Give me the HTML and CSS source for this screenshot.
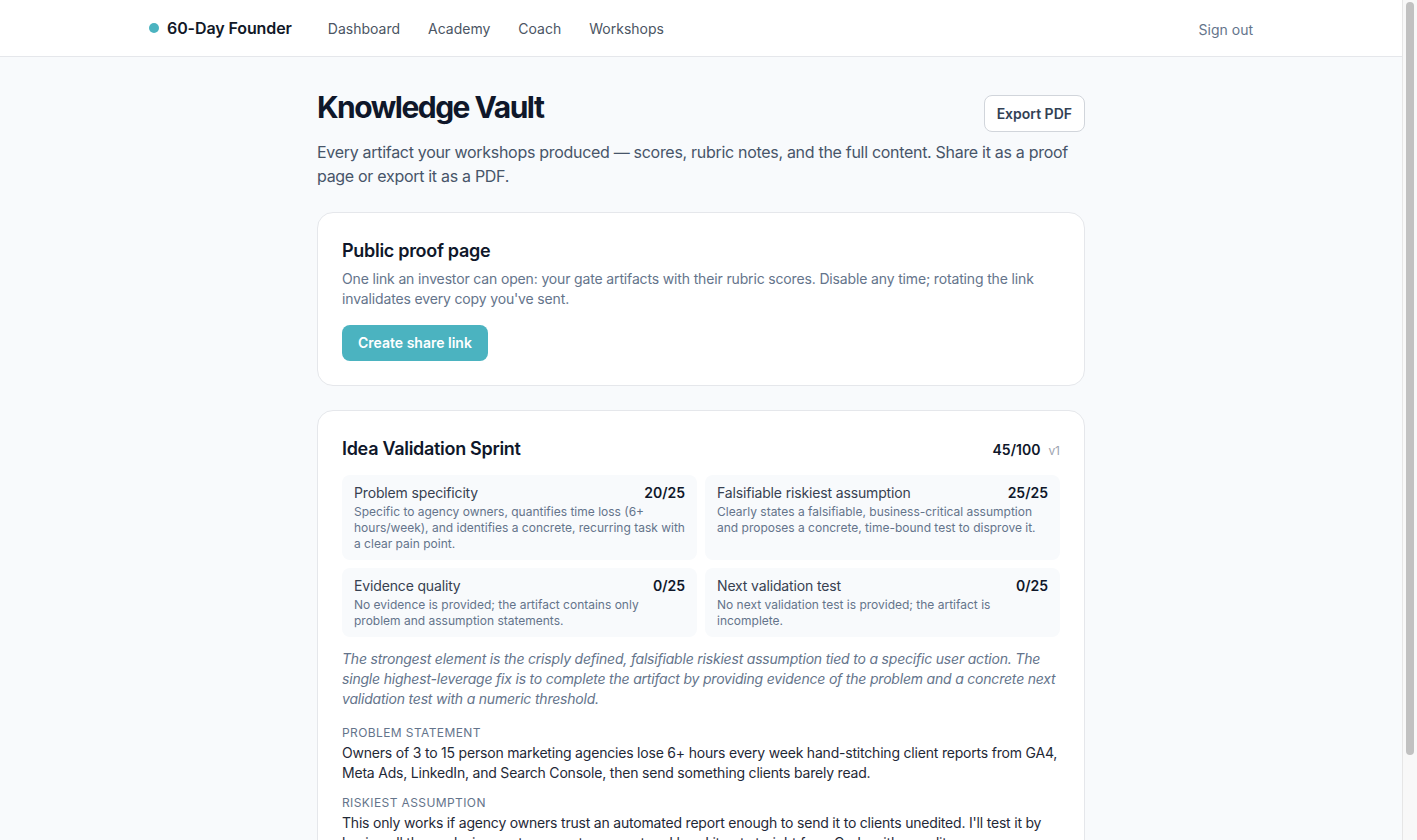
FILE: index.html
```html
<!DOCTYPE html>
<html lang="en">
<head>
    <meta charset="UTF-8">
    <meta name="viewport" content="width=device-width, initial-scale=1.0">
    <title>Knowledge Vault · 60-Day Founder</title>
    <link rel="stylesheet" href="styles.css">
</head>
<body>
    <header class="topbar">
        <div class="topbar-inner">
            <div class="topbar-left">
                <a class="brand" href="#"><span class="brand-dot"></span>60-Day Founder</a>
                <nav class="nav">
                    <a href="#">Dashboard</a>
                    <a href="#">Academy</a>
                    <a href="#">Coach</a>
                    <a href="#">Workshops</a>
                </nav>
            </div>
            <a class="signout" href="#">Sign out</a>
        </div>
    </header>

    <main class="main">
        <div class="page-head">
            <h1>Knowledge Vault</h1>
            <button class="btn-outline">Export PDF</button>
        </div>
        <p class="lead">Every artifact your workshops produced — scores, rubric notes, and the full content. Share it as a proof page or export it as a PDF.</p>

        <section class="card">
            <h2>Public proof page</h2>
            <p class="card-desc">One link an investor can open: your gate artifacts with their rubric scores. Disable any time; rotating the link invalidates every copy you've sent.</p>
            <button class="btn-primary">Create share link</button>
        </section>

        <section class="card">
            <div class="artifact-head">
                <h2>Idea Validation Sprint</h2>
                <div class="total"><strong>45/100</strong><span class="version">v1</span></div>
            </div>

            <div class="rubric">
                <div class="rubric-item">
                    <div class="rubric-top"><span>Problem specificity</span><strong>20/25</strong></div>
                    <p>Specific to agency owners, quantifies time loss (6+ hours/week), and identifies a concrete, recurring task with a clear pain point.</p>
                </div>
                <div class="rubric-item">
                    <div class="rubric-top"><span>Falsifiable riskiest assumption</span><strong>25/25</strong></div>
                    <p>Clearly states a falsifiable, business-critical assumption and proposes a concrete, time-bound test to disprove it.</p>
                </div>
                <div class="rubric-item">
                    <div class="rubric-top"><span>Evidence quality</span><strong>0/25</strong></div>
                    <p>No evidence is provided; the artifact contains only problem and assumption statements.</p>
                </div>
                <div class="rubric-item">
                    <div class="rubric-top"><span>Next validation test</span><strong>0/25</strong></div>
                    <p>No next validation test is provided; the artifact is incomplete.</p>
                </div>
            </div>

            <p class="feedback">The strongest element is the crisply defined, falsifiable riskiest assumption tied to a specific user action. The single highest-leverage fix is to complete the artifact by providing evidence of the problem and a concrete next validation test with a numeric threshold.</p>

            <div class="field">
                <div class="field-label">Problem statement</div>
                <p>Owners of 3 to 15 person marketing agencies lose 6+ hours every week hand-stitching client reports from GA4, Meta Ads, LinkedIn, and Search Console, then send something clients barely read.</p>
            </div>
            <div class="field">
                <div class="field-label">Riskiest assumption</div>
                <p>This only works if agency owners trust an automated report enough to send it to clients unedited. I'll test it by having all the analysis agents generate a report and hand it out straight from Cody with no edits.</p>
            </div>
        </section>
    </main>

    <!-- the window's scrollbar, as seen in the capture -->
    <div class="scrollbar"><div class="scrollbar-thumb"></div></div>
</body>
</html>
```

FILE: styles.css
```css
body {
    font-family: Inter, "Noto Sans", sans-serif;
    margin: 0 15px 0 0;
    padding: 0;
    background-color: #f8fafc;
    color: #0f172a;
}

a {
    text-decoration: none;
    color: inherit;
}

.scrollbar {
    position: fixed;
    top: 0;
    right: 0;
    bottom: 0;
    width: 14px;
    background: #f8f8f8;
    border-left: 1px solid #e6e6e6;
}

.scrollbar-thumb {
    margin: 2px 3px 0 3px;
    height: 753px;
    border-radius: 5px;
    background: #c1c1c1;
}

.topbar {
    background: white;
    border-bottom: 1px solid #e5e7eb;
}

.topbar-inner {
    max-width: 1104px;
    margin: 0 auto;
    padding: 0 24px;
    height: 56px;
    display: flex;
    align-items: center;
    justify-content: space-between;
}

.topbar-left {
    display: flex;
    align-items: center;
}

.brand {
    display: flex;
    align-items: center;
    gap: 8px;
    font-size: 16px;
    font-weight: 600;
    color: #111827;
    letter-spacing: -0.1px;
}

.brand-dot {
    width: 10px;
    height: 10px;
    border-radius: 50%;
    background-color: #4bb3c0;
}

.nav {
    display: flex;
    gap: 28px;
    margin-left: 36px;
    font-size: 14px;
    color: #4b5563;
}

.signout {
    font-size: 14px;
    color: #64748b;
    margin-top: 2px;
}

.main {
    max-width: 768px;
    margin: 0 auto;
    padding: 32px 0 56px;
}

.page-head {
    display: flex;
    justify-content: space-between;
    align-items: flex-start;
    gap: 24px;
}

h1 {
    font-size: 30px;
    line-height: 36px;
    font-weight: 700;
    letter-spacing: -1.5px;
    margin: 0;
    color: #0f172a;
}

.lead {
    font-size: 16px;
    line-height: 24px;
    letter-spacing: -0.3px;
    color: #475569;
    margin: 8px 0 0;
}

.btn-outline {
    flex-shrink: 0;
    margin-top: 6px;
    font-family: inherit;
    font-size: 14px;
    font-weight: 600;
    color: #334155;
    background: white;
    border: 1px solid #d1d5db;
    border-radius: 8px;
    padding: 8px 12px;
    line-height: 19px;
    cursor: pointer;
}

.card {
    background: white;
    border: 1px solid #e5e7eb;
    border-radius: 16px;
    padding: 24px;
    margin-top: 24px;
}

.card h2 {
    font-size: 18px;
    line-height: 28px;
    font-weight: 600;
    letter-spacing: -0.3px;
    margin: 0;
    color: #0f172a;
}

.card-desc {
    font-size: 14px;
    line-height: 20px;
    letter-spacing: -0.15px;
    color: #64748b;
    margin: 4px 0 0;
}

.btn-primary {
    margin-top: 16px;
    font-family: inherit;
    font-size: 14px;
    font-weight: 600;
    line-height: 20px;
    color: white;
    background-color: #4bb3c0;
    border: none;
    border-radius: 8px;
    padding: 8px 16px;
    cursor: pointer;
}

.artifact-head {
    display: flex;
    justify-content: space-between;
    align-items: center;
}

.total {
    font-size: 14px;
    color: #0f172a;
}

.total strong {
    font-weight: 600;
}

.version {
    font-size: 12px;
    color: #9ca3af;
    margin-left: 8px;
}

.rubric {
    display: grid;
    grid-template-columns: 1fr 1fr;
    gap: 8px;
    margin-top: 12px;
}

.rubric-item {
    background-color: #f8fafc;
    border-radius: 8px;
    padding: 8px 12px;
}

.rubric-top {
    display: flex;
    justify-content: space-between;
    gap: 12px;
    font-size: 14px;
    line-height: 20px;
    color: #374151;
}

.rubric-top span {
    letter-spacing: -0.15px;
}

.rubric-top strong {
    font-weight: 600;
    color: #0f172a;
}

.rubric-item p {
    font-size: 12px;
    line-height: 16px;
    color: #64748b;
    margin: 1px 0 0;
}

.feedback {
    font-size: 14px;
    line-height: 20px;
    letter-spacing: -0.2px;
    font-style: italic;
    color: #64748b;
    margin: 12px 0 0;
}

.field {
    margin-top: 12px;
}

.feedback + .field {
    margin-top: 16px;
}

.field-label {
    font-size: 12px;
    line-height: 16px;
    text-transform: uppercase;
    letter-spacing: 0.4px;
    color: #64748b;
}

.field p {
    font-size: 14px;
    line-height: 20px;
    letter-spacing: -0.2px;
    color: #1f2937;
    margin: 2px 0 0;
}
```
